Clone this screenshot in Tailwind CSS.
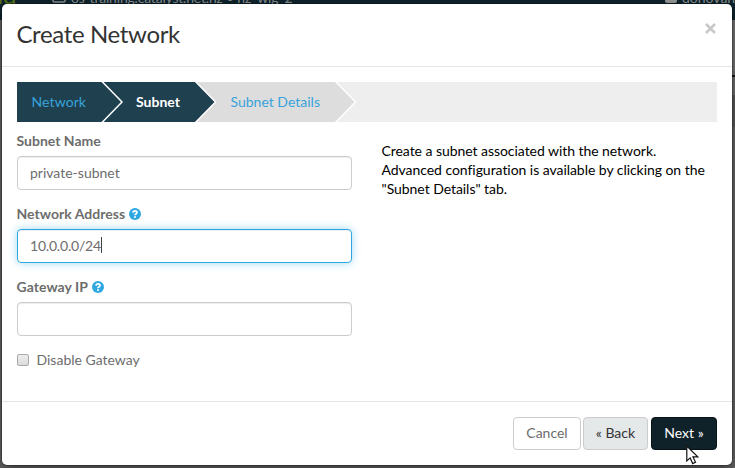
<!DOCTYPE html>
<html lang="en">
<head>
<meta charset="utf-8">
<title>Create Network</title>
<script src="https://cdn.jsdelivr.net/npm/@tailwindcss/browser@4"></script>
</head>
<body class="w-[735px] h-[468px] overflow-hidden relative bg-[#666] font-['Lato',sans-serif] text-[14px] leading-[19px] text-[#6d6d6d]">
  <!-- dimmed page behind the dialog -->
  <div class="absolute inset-0">
    <div class="h-5 bg-[#0f242d] relative overflow-hidden text-[#8b9194]">
      <span class="absolute left-[-9px] top-[-17px] text-[24px] leading-6 text-[#56761b]">ad</span>
      <svg class="absolute left-[52px] top-[-9px]" width="14" height="12" fill="none" stroke="#8b9194" stroke-width="1.5"><rect x="1" y="1" width="12" height="10" rx="1"/></svg>
      <span class="absolute left-[71px] top-[-12px] whitespace-nowrap tracking-[-0.2px]">os-training.catalyst.net.nz • nz_wlg_2</span>
      <span class="absolute left-[665px] top-[-8px] w-[12px] h-[11px] rounded-[2px] bg-[#999]"></span>
      <span class="absolute left-[682px] top-[-12px]">donovan</span>
    </div>
    <div class="ml-auto w-1 h-[55px] bg-[#767676]"></div>
    <div class="ml-auto w-1 h-[2px] bg-[#161616]"></div>
    <div class="ml-auto w-1 h-[18px] bg-[#717171]"></div>
    <div class="ml-auto w-1 h-8 bg-[#5c5c5c]"></div>
  </div>

  <div class="absolute left-[2px] top-1 w-[730px] h-[461px] bg-white rounded-[5px] shadow-[0_0_0_1px_rgba(0,0,0,0.2),0_5px_15px_rgba(0,0,0,0.5)] flex flex-col">
    <header class="h-[63px] shrink-0 border-b border-[#e5e5e5] flex justify-between pl-[14.5px] pr-[16px] pt-[14px]">
      <h1 class="text-[24px] leading-[31px] text-[#333] tracking-[-0.36px]">Create Network</h1>
      <svg class="mt-[5px]" width="11" height="11" viewBox="0 0 11 11" stroke="#c8c8c8" stroke-width="2.5"><path d="M1 1 10 10M10 1 1 10"/></svg>
    </header>

    <main class="flex-1 px-[15px] pt-[15px]">
      <nav class="relative h-10 w-[700px] bg-[#eee] flex items-center pb-[2px]">
        <svg class="absolute inset-0" width="700" height="40">
          <path fill="#ddd" d="M179 0H319L338.500 20 319 40H179Z"/>
          <path fill="none" stroke="#fff" stroke-width="1.5" d="M318.500-.5 338.500 20 318.500 40.500"/>
          <path fill="#1f404e" d="M0 0H178.500L198.500 20 178.500 40H0Z"/>
          <path fill="none" stroke="#fff" stroke-width="1.5" d="M178.500-.5 198.500 20 178.500 40.500M85-.5 105 20 85 40.500"/>
        </svg>
        <span class="relative w-[104px] pl-[14.500px] text-[#38a3db] tracking-[0.1px]">Network</span>
        <span class="relative w-[95px] pl-[15px] font-bold text-white">Subnet</span>
        <span class="relative pl-[14.500px] text-[#38a3db]">Subnet Details</span>
      </nav>

      <div class="flex">
        <form class="w-[335px] pt-[9px]">
          <label class="block font-bold mb-[6px] ml-[-0.5px]">Subnet Name</label>
          <div class="h-[34px] mb-[14px] border border-[#ccc] rounded-[4px] shadow-[inset_0_1px_1px_rgba(0,0,0,0.075)] px-3 pb-[2px] flex items-center">private-subnet</div>
          <label class="font-bold mb-[6px] ml-[-0.5px] flex items-center gap-[4px] tracking-[0.03px]">Network Address
            <svg width="12" height="12" viewBox="0 0 12 12"><circle cx="6" cy="6" r="6" fill="#2fa8e2"/><path d="M4 4.600C4.100 2.300 8 2.400 8 4.500 8 5.800 6 5.800 6 7.300" fill="none" stroke="#fff" stroke-width="1.700"/><rect x="5.100" y="8.200" width="1.800" height="1.700" fill="#fff"/></svg>
          </label>
          <div class="h-[34px] mb-[14px] border border-[#2fa8e2] rounded-[4px] shadow-[inset_0_1px_1px_rgba(0,0,0,0.075),0_0_8px_rgba(47,168,226,0.45)] px-3 pb-[2px] flex items-center tracking-[-0.2px]">10.0.0.0/24<span class="w-px h-4 bg-[#444]"></span></div>
          <label class="font-bold mb-[6px] ml-[-0.5px] flex items-center gap-[4px] tracking-[0.05px]">Gateway IP
            <svg width="12" height="12" viewBox="0 0 12 12"><circle cx="6" cy="6" r="6" fill="#2fa8e2"/><path d="M4 4.600C4.100 2.300 8 2.400 8 4.500 8 5.800 6 5.800 6 7.300" fill="none" stroke="#fff" stroke-width="1.700"/><rect x="5.100" y="8.200" width="1.800" height="1.700" fill="#fff"/></svg>
          </label>
          <div class="h-[34px] mb-[14px] border border-[#ccc] rounded-[4px] shadow-[inset_0_1px_1px_rgba(0,0,0,0.075)]"></div>
          <label class="flex items-center gap-[7.5px]"><span class="w-3 h-3 border border-[#a9a9a9] rounded-[2px] bg-linear-to-b from-[#ededed] to-[#dcdcdc]"></span>Disable Gateway</label>
        </form>
        <p class="ml-[29.500px] mt-[19px] w-[335px] text-black tracking-[-0.05px]">Create a subnet associated with the network. Advanced configuration is available by clicking on the "Subnet Details" tab.</p>
      </div>
    </main>

    <footer class="h-16 shrink-0 border-t border-[#e5e5e5] flex justify-end pr-[15px] pt-[15px]">
      <div class="w-[68px] h-[33px] border border-[#ccc] rounded-[4px] flex items-center justify-center pb-[2px]">Cancel</div>
      <div class="ml-[2px] w-[65px] h-[33px] border border-[#ccc] bg-[#e4e8e9] rounded-[4px] flex items-center justify-center pb-[2px] text-[#333]">« Back</div>
      <div class="ml-[3px] w-[66px] h-[33px] border border-[#081217] bg-[#0f2129] rounded-[4px] flex items-center justify-center pb-[2px] text-white">Next »</div>
    </footer>
  </div>

  <!-- mouse pointer -->
  <svg class="absolute left-[686px] top-[445px]" width="13" height="20" viewBox="0 0 13 20"><path d="M.8 1V16L4.200 12.900 6.700 18.600 9.500 17.300 7 11.900H11.800Z" fill="#fff" stroke="#111" stroke-width="1.200"/></svg>
</body>
</html>
